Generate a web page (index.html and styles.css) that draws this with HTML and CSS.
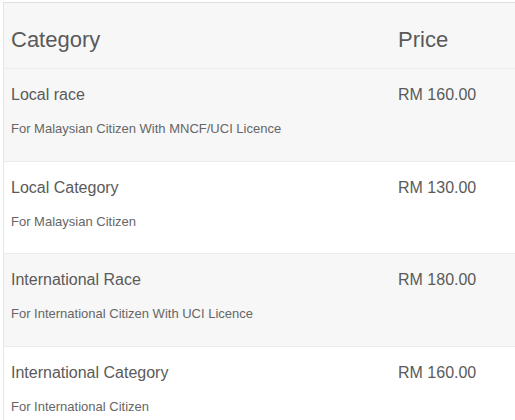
FILE: index.html
```html
<!DOCTYPE html>
<html>
<head>
<meta charset="utf-8">
<link rel="stylesheet" href="styles.css">
</head>
<body>
<div class="wrap">
<table class="prices">
  <thead>
    <tr><th class="cat">Category</th><th class="price">Price</th></tr>
  </thead>
  <tbody>
    <tr class="odd">
      <td class="cat"><div class="title">Local race</div><div class="sub">For Malaysian Citizen With MNCF/UCI Licence</div></td>
      <td class="price"><div class="title">RM 160.00</div></td>
    </tr>
    <tr>
      <td class="cat"><div class="title">Local Category</div><div class="sub">For Malaysian Citizen</div></td>
      <td class="price"><div class="title">RM 130.00</div></td>
    </tr>
    <tr class="odd">
      <td class="cat"><div class="title">International Race</div><div class="sub">For International Citizen With UCI Licence</div></td>
      <td class="price"><div class="title">RM 180.00</div></td>
    </tr>
    <tr>
      <td class="cat"><div class="title">International Category</div><div class="sub">For International Citizen</div></td>
      <td class="price"><div class="title">RM 160.00</div></td>
    </tr>
  </tbody>
</table>
</div>
</body>
</html>
```
FILE: styles.css
```css
html, body {
  margin: 0;
  padding: 0;
  overflow: hidden;
  background: #fff;
}
.wrap {
  padding: 2px 0 0 3px;
  width: 530px;
}
.prices {
  border-collapse: collapse;
  width: 520px;
  font-family: "Liberation Sans", Arial, sans-serif;
  color: #5a5a5a;
  border-top: 1px solid #e0e0e0;
  border-left: 1px solid #e6e6e6;
}
.prices th {
  font-weight: normal;
  font-size: 22px;
  line-height: 30px;
  text-align: left;
  padding: 22px 7px 13px 7px;
  background: #f7f7f7;
  border-bottom: 1px solid #ececec;
}
.prices td {
  vertical-align: top;
  padding: 15px 7px 22.5px 7px;
  border-bottom: 1px solid #ececec;
}
.prices tr.odd td {
  background: #f7f7f7;
}
.cat {
  width: 373px;
}
.title {
  font-size: 16px;
  line-height: 22px;
}
.sub {
  font-size: 13px;
  line-height: 18px;
  margin-top: 14px;
  color: #666;
}
```
